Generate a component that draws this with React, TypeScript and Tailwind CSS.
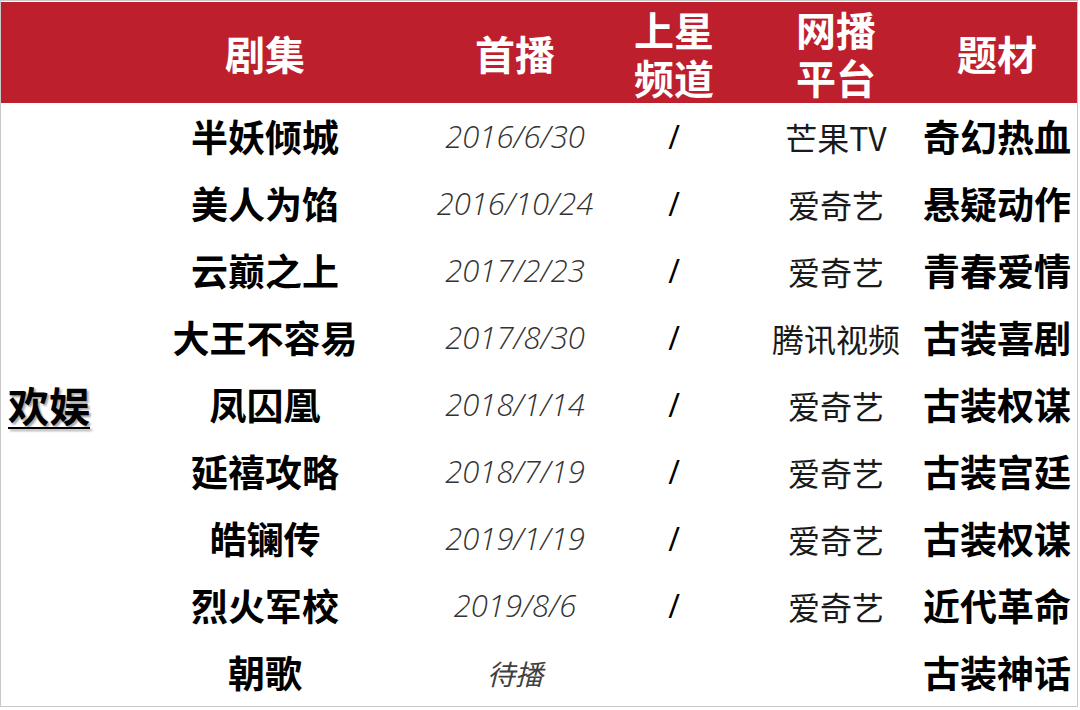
const ROWS = [
  { name: '半妖倾城', date: '2016/6/30', sat: '/', web: '芒果TV', genre: '奇幻热血' },
  { name: '美人为馅', date: '2016/10/24', sat: '/', web: '爱奇艺', genre: '悬疑动作' },
  { name: '云巅之上', date: '2017/2/23', sat: '/', web: '爱奇艺', genre: '青春爱情' },
  { name: '大王不容易', date: '2017/8/30', sat: '/', web: '腾讯视频', genre: '古装喜剧' },
  { name: '凤囚凰', date: '2018/1/14', sat: '/', web: '爱奇艺', genre: '古装权谋' },
  { name: '延禧攻略', date: '2018/7/19', sat: '/', web: '爱奇艺', genre: '古装宫廷' },
  { name: '皓镧传', date: '2019/1/19', sat: '/', web: '爱奇艺', genre: '古装权谋' },
  { name: '烈火军校', date: '2019/8/6', sat: '/', web: '爱奇艺', genre: '近代革命' },
  { name: '朝歌', date: '待播', sat: '', web: '', genre: '古装神话' },
];

const cjk = "font-['Microsoft_YaHei','Noto_Sans_CJK_SC',sans-serif]";

function Cell({ children, className = '' }: { children?: React.ReactNode; className?: string }) {
  return <div className={`flex items-center justify-center whitespace-nowrap ${className}`}>{children}</div>;
}

export default function App() {
  return (
    <div className="w-[1080px] h-[710px] bg-white">
      <div className={`w-[1078px] border border-[#c9c9c9] ${cjk}`}>
        {/* Header */}
        <div className="grid grid-cols-[139px_250px_250px_68px_256px_66px] h-[101px] mt-px bg-[#be1f2d] text-white font-bold text-[40px]">
          <div />
          <Cell>剧集</Cell>
          <Cell>首播</Cell>
          <Cell className="flex-col leading-[48px]">
            <span className="block">上星</span>
            <span className="block">频道</span>
          </Cell>
          <Cell className="flex-col leading-[48px]">
            <span className="block">网播</span>
            <span className="block">平台</span>
          </Cell>
          <Cell>题材</Cell>
        </div>

        {/* Body */}
        <div className="grid grid-cols-[139px_250px_250px_68px_256px_66px] grid-rows-[repeat(9,67px)]">
          <div className="row-span-9 flex items-center pl-[7px]">
            <span className="text-[41px] font-bold text-black underline decoration-2 underline-offset-[5px] [text-shadow:2px_2px_2px_rgba(0,0,0,0.35)]">
              欢娱
            </span>
          </div>
          {ROWS.map((r) => (
            <div key={r.name} className="contents">
              <Cell className="col-start-2 text-[37px] font-bold text-black">{r.name}</Cell>
              <Cell
                className={
                  r.date === '待播'
                    ? 'text-[28px] italic text-[#404040]'
                    : "font-['Open_Sans',sans-serif] text-[31px] italic font-light text-[#333333]"
                }
              >
                {r.date}
              </Cell>
              <Cell className="font-['Open_Sans',sans-serif] text-[32px] text-black">{r.sat}</Cell>
              <Cell className="text-[32px] text-[#1a1a1a]">{r.web}</Cell>
              <Cell className="text-[37px] font-bold text-black">{r.genre}</Cell>
            </div>
          ))}
        </div>
      </div>
    </div>
  );
}
